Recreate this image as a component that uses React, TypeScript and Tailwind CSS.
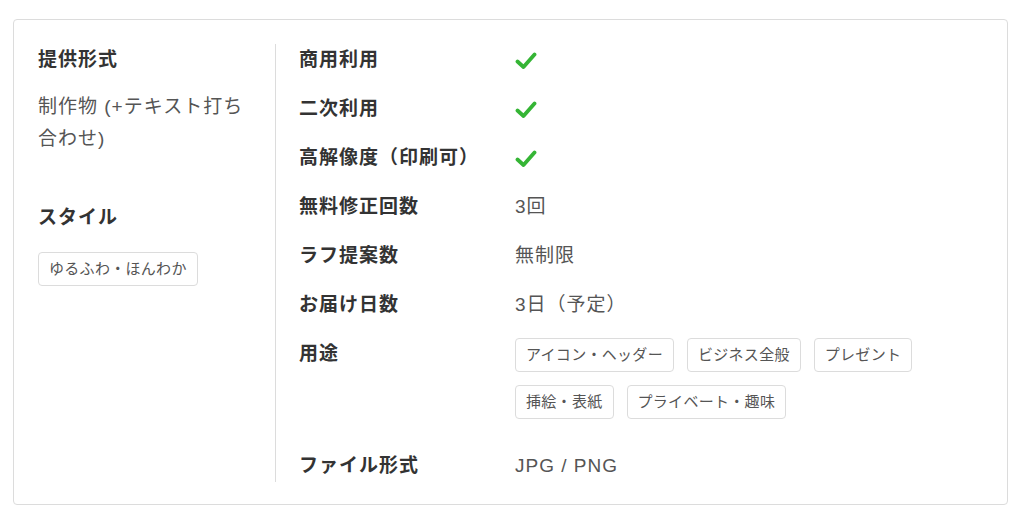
const font = { fontFamily: '"Liberation Sans", "Noto Sans CJK JP", sans-serif' };

type Spec = { label: string; value?: string; check?: boolean; tags?: string[] };

const specs: Spec[] = [
  { label: "商用利用", check: true },
  { label: "二次利用", check: true },
  { label: "高解像度（印刷可）", check: true },
  { label: "無料修正回数", value: "3回" },
  { label: "ラフ提案数", value: "無制限" },
  { label: "お届け日数", value: "3日（予定）" },
  {
    label: "用途",
    tags: ["アイコン・ヘッダー", "ビジネス全般", "プレゼント", "挿絵・表紙", "プライベート・趣味"],
  },
  { label: "ファイル形式", value: "JPG / PNG" },
];

function Check() {
  return (
    <svg width="22" height="20" viewBox="0 0 22 20" className="mt-[1px]">
      <polyline
        points="2.5,10.5 8.5,16 19.5,3.5"
        fill="none"
        stroke="#35b535"
        strokeWidth="3.8"
        strokeLinecap="round"
        strokeLinejoin="round"
      />
    </svg>
  );
}

function Tag({ text }: { text: string }) {
  return (
    <span className="inline-flex h-[34px] items-center rounded-[4px] border border-[#dcdcdc] px-[10px] text-[15px] tracking-[0.02em] text-[#555]">
      {text}
    </span>
  );
}

export default function App() {
  return (
    <div className="min-h-[518px] bg-white pt-[19px] pl-[13px]" style={font}>
      <div className="flex w-[995px] rounded-[4px] border border-[#dcdcdc] px-[24px] pt-[24px] pb-[22px]">
        {/* left */}
        <div className="w-[237px] shrink-0 pr-[24px]">
          <div className="text-[19px] font-bold leading-[32px] tracking-[1px] text-[#333]">提供形式</div>
          <div className="mt-[15px] text-[19px] leading-[32px] tracking-[1px] text-[#555]">
            制作物 (+テキスト打ち合わせ)
          </div>
          <div className="mt-[47px] text-[19px] font-bold leading-[32px] tracking-[1px] text-[#333]">スタイル</div>
          <div className="mt-[18px] flex">
            <Tag text="ゆるふわ・ほんわか" />
          </div>
        </div>

        {/* right */}
        <div className="flex-1 border-l border-[#dcdcdc] pl-[23px]">
          {specs.map((s, i) => (
            <div
              key={s.label}
              className={"flex " + (i < specs.length - 1 && !s.tags ? "mb-[17px]" : "")}
            >
              <div className="w-[216px] shrink-0 text-[19px] font-bold leading-[32px] tracking-[1px] text-[#333]">
                {s.label}
              </div>
              <div className="flex-1 text-[19px] leading-[32px] tracking-[1px] text-[#555]">
                {s.check && (
                  <div className="flex h-[32px] items-center">
                    <Check />
                  </div>
                )}
                {s.value}
                {s.tags && (
                  <div className="mt-0 mb-[18px] flex max-w-[420px] flex-wrap gap-x-[13px]">
                    {s.tags.map((t) => (
                      <div key={t} className="mb-[13px] flex">
                        <Tag text={t} />
                      </div>
                    ))}
                  </div>
                )}
              </div>
            </div>
          ))}
        </div>
      </div>
    </div>
  );
}
